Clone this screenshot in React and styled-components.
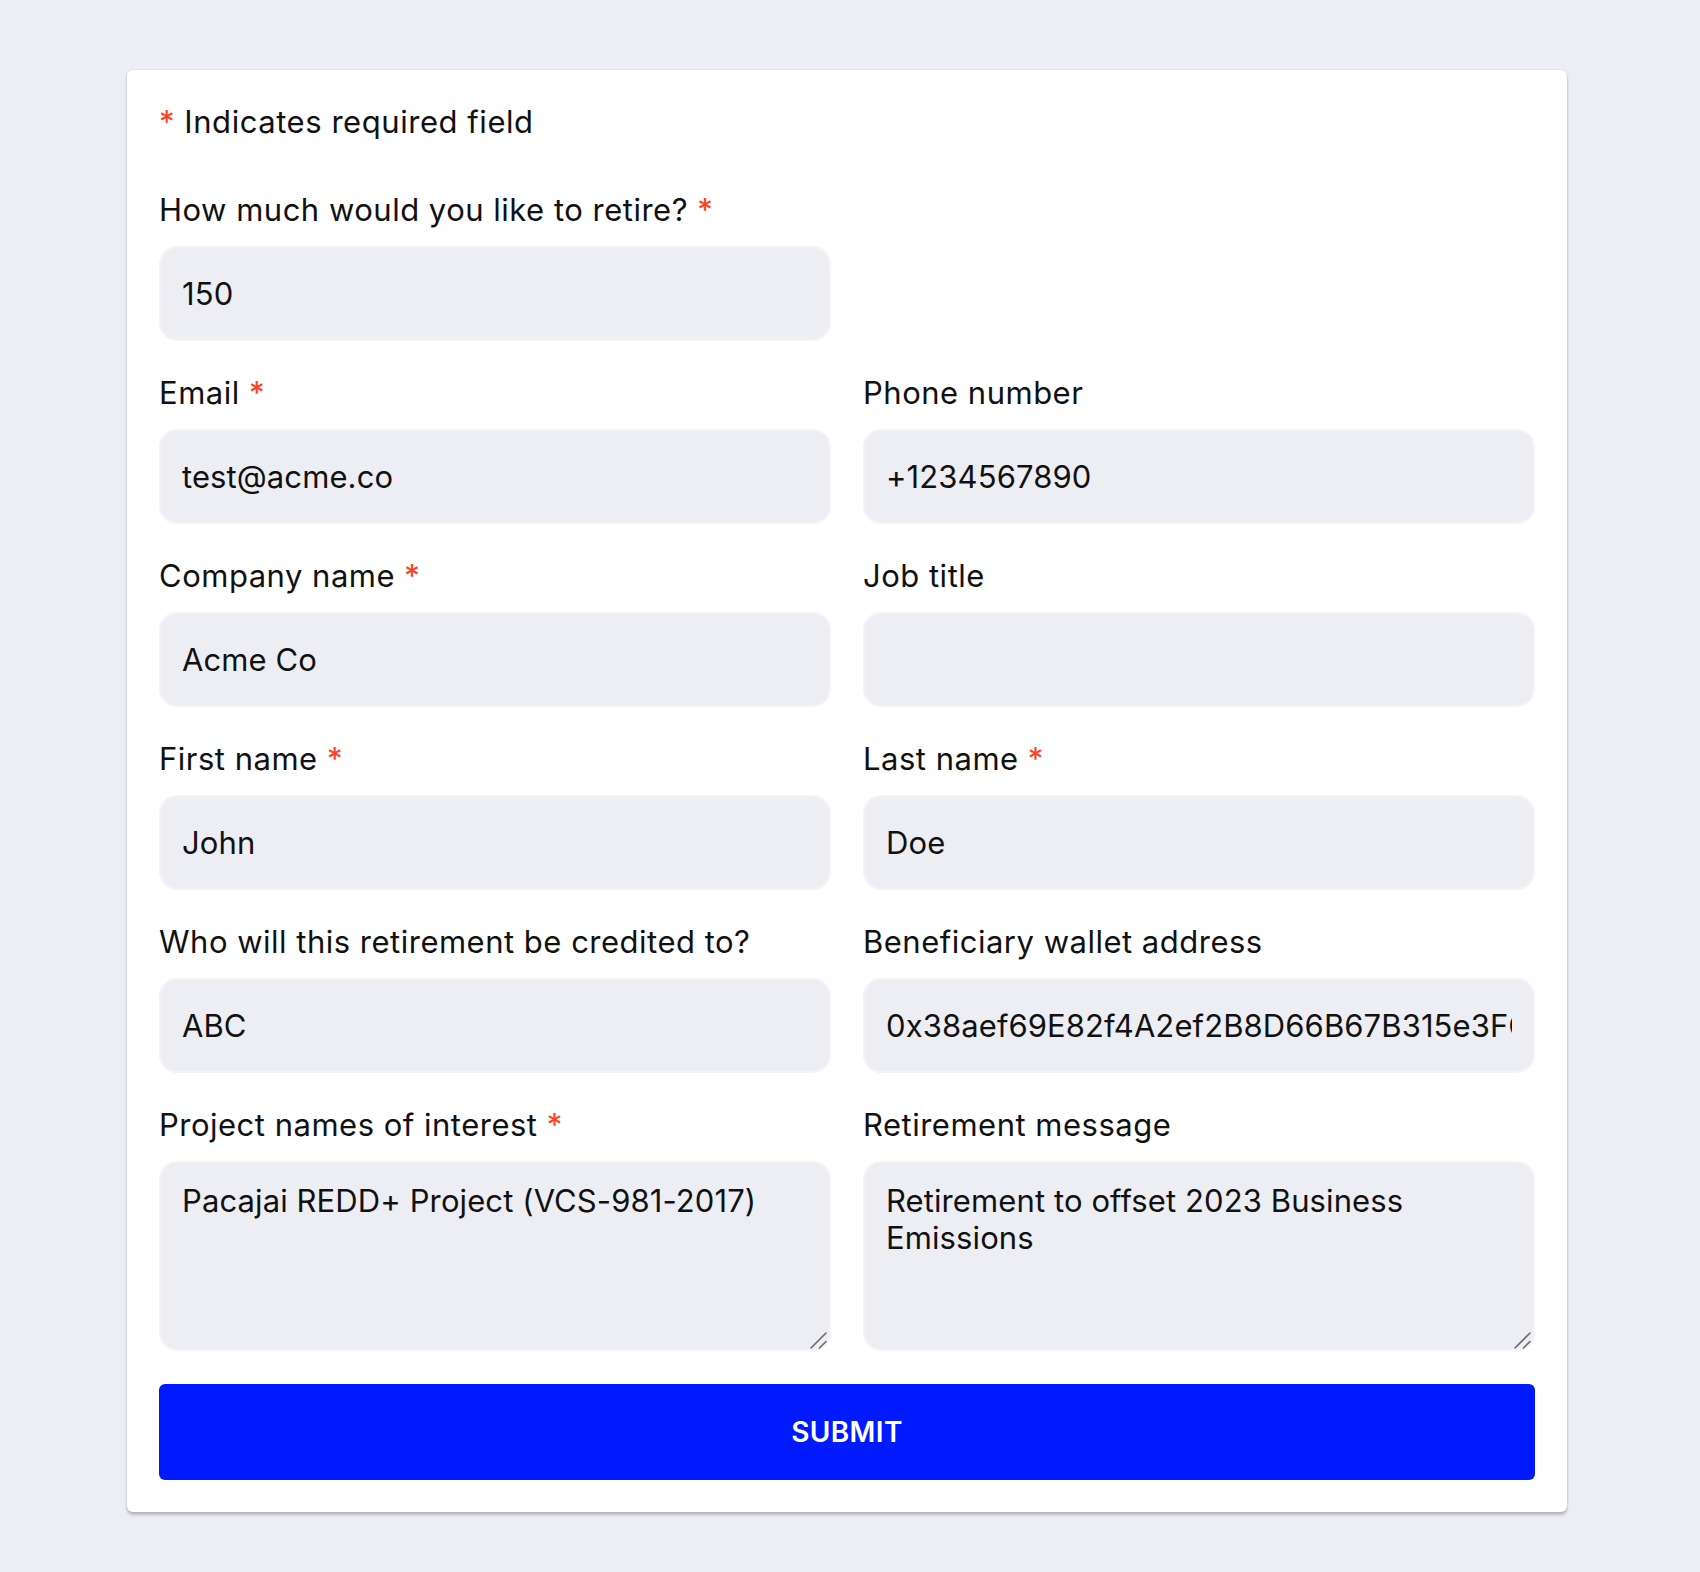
import React from "react";
import styled, { createGlobalStyle } from "styled-components";

const GlobalStyle = createGlobalStyle`
  html, body {
    margin: 0;
    padding: 0;
    background: #edeef3;
  }
  body {
    font-family: Inter, "Noto Sans", "Liberation Sans", sans-serif;
    color: #111;
  }
  * { box-sizing: border-box; }
`;

const Page = styled.div`
  min-height: 1572px;
  padding: 70px 0 59px 127px;
`;

const Card = styled.form`
  width: 1440px;
  background: #ffffff;
  border-radius: 6px;
  padding: 32px;
  box-shadow: 0 0 2px rgba(0, 0, 0, 0.14), 0 3px 3px rgba(0, 0, 0, 0.22);
`;

const Note = styled.p`
  margin: 0 0 44px;
  font-size: 31px;
  line-height: 40px;
  letter-spacing: 0.55px;
  color: #111;
`;

const Star = styled.span`
  color: #ff4020;
`;

const Grid = styled.div`
  display: grid;
  grid-template-columns: 1fr 1fr;
  column-gap: 32px;
  row-gap: 28px;
`;

const Field = styled.div`
  display: flex;
  flex-direction: column;
`;

const Label = styled.label`
  display: block;
  font-size: 31px;
  line-height: 48px;
  height: 48px;
  margin-bottom: 12px;
  letter-spacing: 0.5px;
  color: #111;
  white-space: nowrap;
`;

const fieldBase = `
  width: 100%;
  border: 2px solid #f4f4f7;
  background: #edeef3;
  border-radius: 18px;
  font-family: Inter, "Noto Sans", "Liberation Sans", sans-serif;
  font-size: 31px;
  letter-spacing: 0.1px;
  color: #111;
  outline: none;
`;

const Input = styled.input`
  ${fieldBase}
  height: 95px;
  padding: 0 21px;
`;

const AreaWrap = styled.div`
  position: relative;
  height: 190px;
`;

const TextArea = styled.textarea`
  ${fieldBase}
  height: 190px;
  padding: 19px 21px;
  line-height: 37px;
  resize: none;
  display: block;
`;

const Grip = styled.svg`
  position: absolute;
  right: 3px;
  bottom: 2px;
  width: 18px;
  height: 18px;
  pointer-events: none;
`;

const SubmitButton = styled.button`
  display: block;
  width: 100%;
  height: 96px;
  margin-top: 33px;
  border: none;
  border-radius: 6px;
  background: #001aff;
  color: #ffffff;
  font-family: Inter, "Noto Sans", "Liberation Sans", sans-serif;
  font-size: 28px;
  font-weight: 600;
  letter-spacing: 0.4px;
  text-transform: uppercase;
  cursor: pointer;
`;

const Spacer = styled.div``;

function ResizeGrip() {
  return (
    <Grip viewBox="0 0 18 18">
      <line x1="1" y1="17" x2="16" y2="2" stroke="#6b6b70" strokeWidth="1.6" strokeLinecap="round" />
      <line x1="9.5" y1="17" x2="16" y2="10.5" stroke="#6b6b70" strokeWidth="1.6" strokeLinecap="round" />
    </Grip>
  );
}

function FormField({ label, required, value, multiline, id }) {
  return (
    <Field>
      <Label htmlFor={id}>
        {label}
        {required && (
          <>
            {" "}
            <Star>*</Star>
          </>
        )}
      </Label>
      {multiline ? (
        <AreaWrap>
          <TextArea id={id} defaultValue={value} />
          <ResizeGrip />
        </AreaWrap>
      ) : (
        <Input id={id} type="text" defaultValue={value} />
      )}
    </Field>
  );
}

export default function App() {
  return (
    <>
      <GlobalStyle />
      <Page>
        <Card onSubmit={(e) => e.preventDefault()}>
          <Note>
            <Star>*</Star> Indicates required field
          </Note>
          <Grid>
            <FormField id="amount" label="How much would you like to retire?" required value="150" />
            <Spacer />
            <FormField id="email" label="Email" required value="test@acme.co" />
            <FormField id="phone" label="Phone number" value="+1234567890" />
            <FormField id="company" label="Company name" required value="Acme Co" />
            <FormField id="job" label="Job title" value="" />
            <FormField id="first" label="First name" required value="John" />
            <FormField id="last" label="Last name" required value="Doe" />
            <FormField id="credited" label="Who will this retirement be credited to?" value="ABC" />
            <FormField
              id="wallet"
              label="Beneficiary wallet address"
              value="0x38aef69E82f4A2ef2B8D66B67B315e3FC2d5b7a1"
            />
            <FormField
              id="projects"
              label="Project names of interest"
              required
              multiline
              value="Pacajai REDD+ Project (VCS-981-2017)"
            />
            <FormField
              id="message"
              label="Retirement message"
              multiline
              value="Retirement to offset 2023 Business Emissions"
            />
          </Grid>
          <SubmitButton type="submit">Submit</SubmitButton>
        </Card>
      </Page>
    </>
  );
}
